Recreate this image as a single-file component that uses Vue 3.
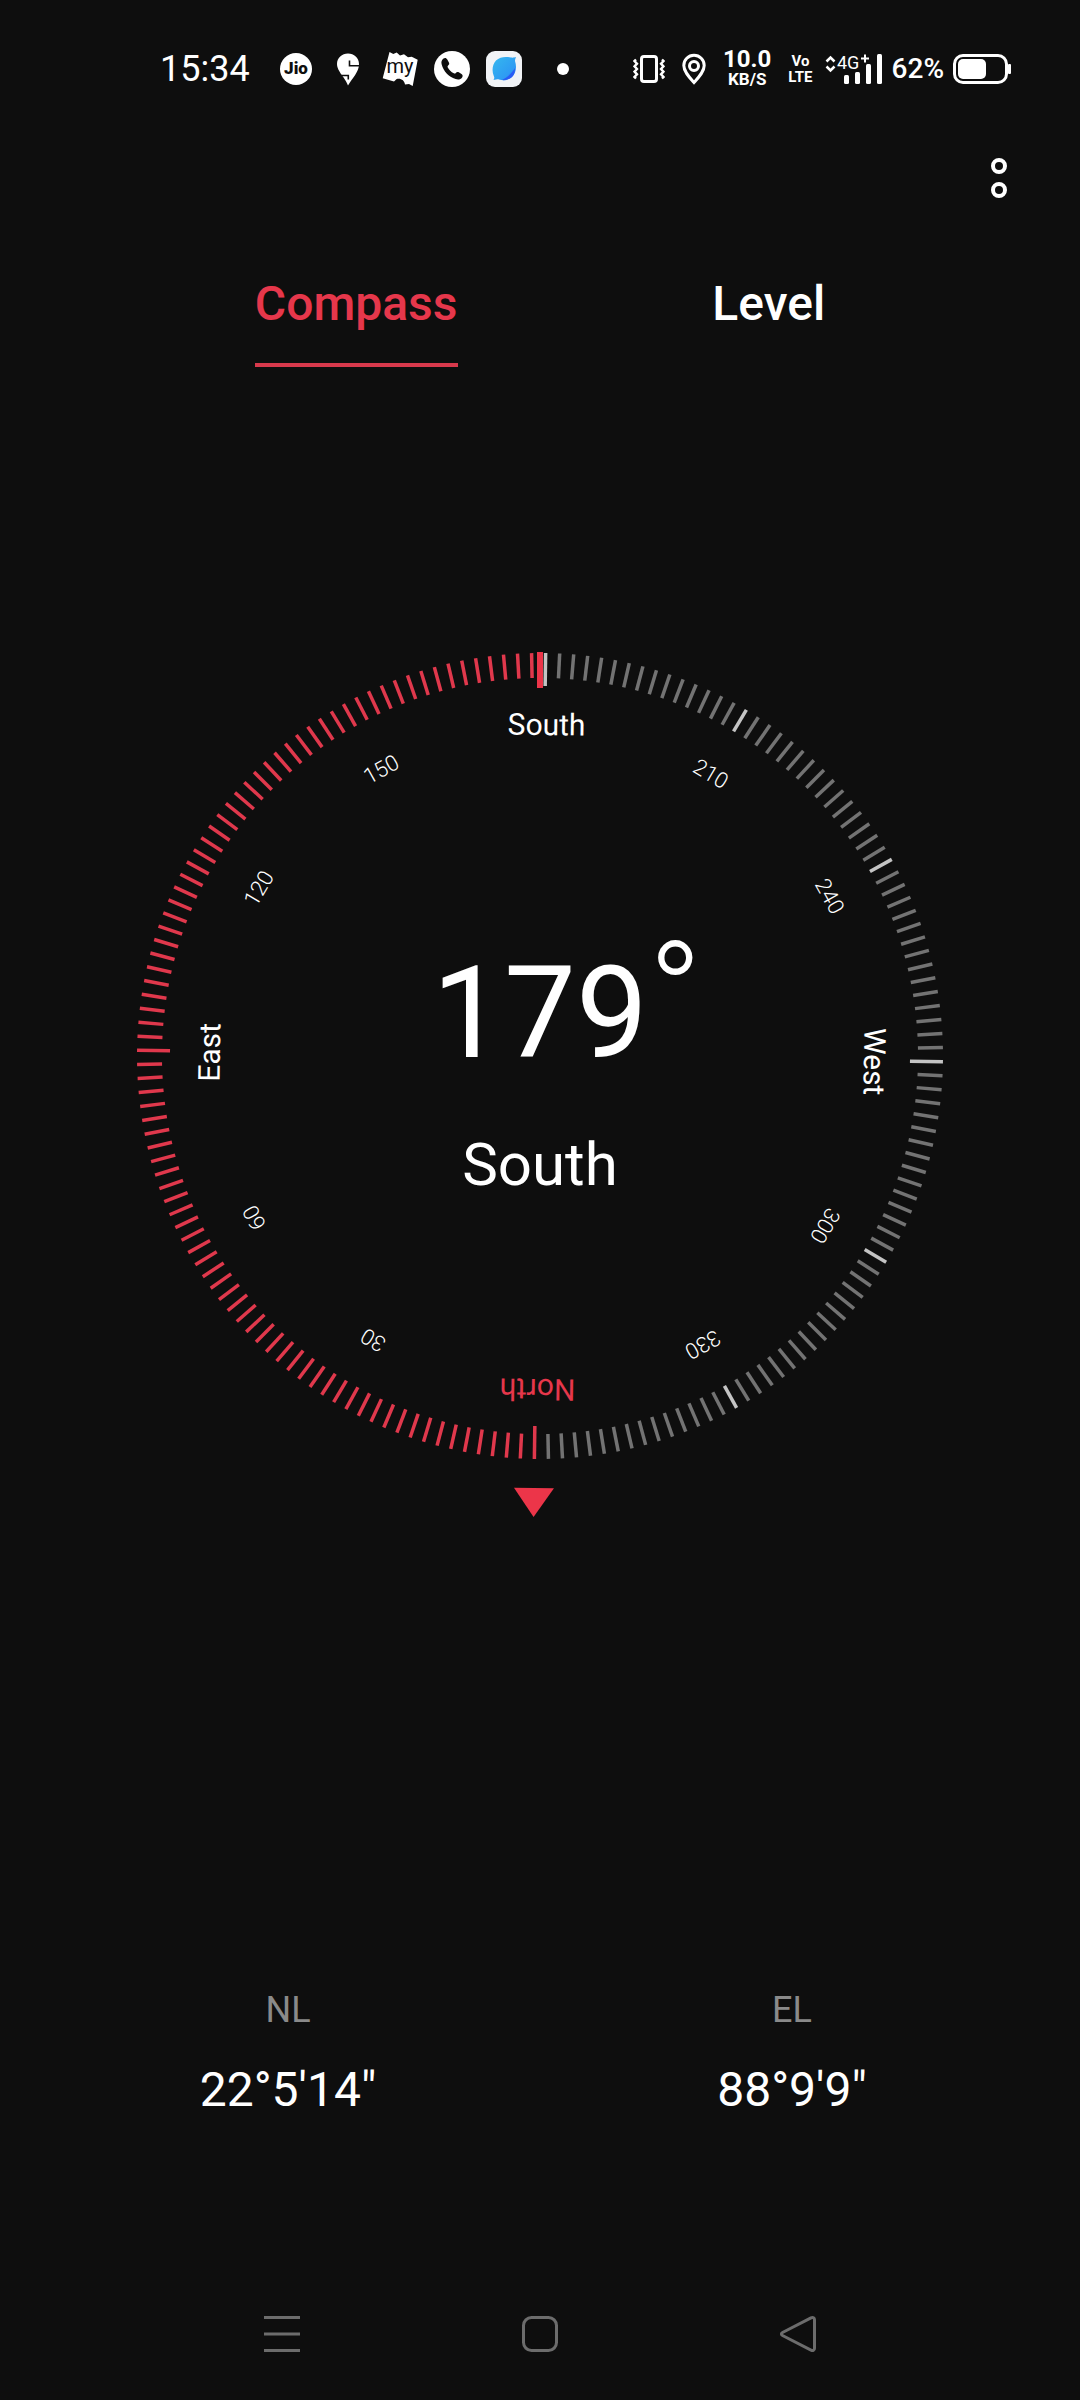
<script setup>
import { ref, computed } from 'vue'

// --- STATE ---
const tabs = ['Compass', 'Level']
const activeTab = ref('Compass')
const heading = ref(179.2)

const coords = [
  { label: 'NL', value: '22°5\'14"' },
  { label: 'EL', value: '88°9\'9"' }
]

const labels = [
  { deg: 0, text: 'North', type: 'north' },
  { deg: 30, text: '30', type: 'num' },
  { deg: 60, text: '60', type: 'num' },
  { deg: 90, text: 'East', type: 'word' },
  { deg: 120, text: '120', type: 'num' },
  { deg: 150, text: '150', type: 'num' },
  { deg: 180, text: 'South', type: 'word' },
  { deg: 210, text: '210', type: 'num' },
  { deg: 240, text: '240', type: 'num' },
  { deg: 270, text: 'West', type: 'word' },
  { deg: 300, text: '300', type: 'num' },
  { deg: 330, text: '330', type: 'num' }
]

// --- DIAL ---
const degrees = computed(() => Math.floor(heading.value))

const directionName = computed(() => {
  const names = ['North', 'East', 'South', 'West']
  return names[Math.round(heading.value / 90) % 4]
})

// One tick every 2 degrees, the swept part goes red
const ticks = computed(() => {
  const list = []
  for (let deg = 0; deg < 360; deg += 2) {
    let color = 'tick-gray'
    if (deg <= heading.value) color = 'tick-red'
    else if (deg % 30 === 0) color = 'tick-light'
    list.push({ deg, color, end: deg % 90 === 0 ? 62 : 54 })
  }
  return list
})

const turn = (deg) => `rotate(${deg - heading.value} 432 432)`
const turnLabel = (deg) => `rotate(${deg - heading.value} 434 433)`
</script>

<template>
  <div class="screen">
    <header class="status-bar">
      <div class="status-left">
        <span class="clock">15:34</span>
        <div class="app-icons">
          <svg width="36" height="36" viewBox="0 0 36 36">
            <circle cx="18" cy="18" r="16" fill="#fff" />
            <text x="18" y="23" class="jio" text-anchor="middle">Jio</text>
          </svg>
          <svg width="36" height="36" viewBox="0 0 36 36">
            <path d="M18 34.500C15.500 28 12 25 9.500 20.500 8 18 7 15.500 7 13 7 7 12 2.500 18 2.500S29 7 29 13c0 8-6.500 14-11 21.500z" fill="#fff" />
            <path d="M19.500 9.500v5.200H30M11 24.500h7.300v4" fill="none" stroke="#0e0e0e" stroke-width="1.600" />
          </svg>
          <svg width="36" height="36" viewBox="0 0 36 36">
            <path d="M7.500 1l3.800 2 3.400-1.500L18 4.500l4-1.200 4 3 3.700-.6 6 3L30.700 35 27 33l-4 .5c-.5-4-4-6.500-8.300-5.500L12 30.500.7 27.300z" fill="#fff" />
            <text x="18" y="22" class="my" text-anchor="middle">my</text>
          </svg>
          <svg width="36" height="36" viewBox="0 0 36 36">
            <circle cx="18" cy="18" r="18" fill="#fff" />
            <path d="M9.500 7.500c1.500-1 3-.5 3.800 1l1.600 3c.6 1.200.3 2.200-.8 3-.6.500-.7 1.200-.3 2 1.400 2.600 3.200 4.400 6 5.800.8.400 1.500.3 2-.4.800-1.100 1.900-1.300 3-.6l2.700 1.700c1.300.9 1.500 2.200.6 3.400-1.600 2.200-4 2.500-6.500 1.600C14.500 25.500 9.500 20.500 7.700 13.500 7 11 7.500 9 9.500 7.500z" fill="#0e0e0e" />
          </svg>
          <svg width="36" height="36" viewBox="0 0 36 36">
            <defs>
              <linearGradient id="leaf" x1="0" y1="0" x2="1" y2="1">
                <stop offset="0" stop-color="#35b8ee" />
                <stop offset="0.7" stop-color="#2e9bf3" />
                <stop offset="1" stop-color="#2b5cf0" />
              </linearGradient>
            </defs>
            <rect width="36" height="36" rx="9" fill="#f1f3f6" />
            <path d="M30 6c-.5 1.500-1 2.500-1 4 2 6 1 12-3 16-4 3.500-9 4-13 2.500-1.500-.5-3 .5-5.500.5 1-1.500 1-2.500.3-4C5.500 20 6.500 13 10 9.500 14 5.500 20 5.500 25 6.500c2 .4 3 0 5-.5z" fill="url(#leaf)" />
            <path d="M29 17c0 4-1 7-3 9-3 2.500-7 3.500-10 3 6-3 10-7 13-12z" fill="#2b5cf5" />
          </svg>
        </div>
        <span class="more-dot"></span>
      </div>

      <div class="status-right">
        <div class="signals">
          <svg width="32" height="30" viewBox="0 0 32 30" fill="none" stroke="#fff">
            <rect x="8.500" y="2.500" width="15" height="25" rx="2.500" stroke-width="3" />
            <path d="M3 5.500L1.500 7l2.500 2.700L1.500 12.300 4 15l-2.500 2.700L4 20.300 1.500 23 3 24.500M29 5.500L30.500 7 28 9.700l2.500 2.600L28 15l2.500 2.700-2.500 2.600 2.500 2.700-1.500 1.500" stroke-width="2.400" />
          </svg>
          <svg width="24" height="32" viewBox="0 0 24 32" fill="none" stroke="#fff" stroke-width="3">
            <path d="M12 29.500C7 24 1.800 18.500 1.800 12.500a10.200 10.200 0 0 1 20.400 0c0 6-5.200 11.500-10.200 17z" />
            <circle cx="12" cy="13" r="4.500" />
          </svg>
          <div class="net-speed">
            <span class="speed">10.0</span>
            <span class="unit">KB/S</span>
          </div>
          <div class="volte">
            <span>Vo</span>
            <span>LTE</span>
          </div>
        </div>
        <div class="power">
          <svg width="60" height="36" viewBox="0 0 60 36">
            <path d="M2.500 10.500l4-4 4 4M2.500 15.500l4 4 4-4" fill="none" stroke="#fff" stroke-width="2.500" />
            <text x="13" y="18" class="net-type">4G</text>
            <path d="M37 7.500h8M41 3.500v8" stroke="#fff" stroke-width="2" />
            <g fill="#fff">
              <rect x="20" y="24" width="5" height="9" rx="1.500" />
              <rect x="31" y="21" width="5" height="12" rx="1.500" />
              <rect x="42" y="13" width="5" height="20" rx="1.500" />
              <rect x="53" y="3" width="5" height="30" rx="1.500" />
            </g>
          </svg>
          <span class="percent">62%</span>
          <svg width="60" height="30" viewBox="0 0 60 30">
            <rect x="2.500" y="1.500" width="52" height="27" rx="8.500" fill="none" stroke="#fff" stroke-width="3" />
            <rect x="6" y="5" width="28" height="20" rx="5" fill="#fff" />
            <rect x="56" y="10" width="3" height="10" rx="1" fill="#fff" />
          </svg>
        </div>
      </div>
    </header>

    <div class="toolbar">
      <button class="btn-menu" aria-label="More options">
        <svg width="18" height="42" viewBox="0 0 18 42" fill="none" stroke="#fff" stroke-width="4">
          <circle cx="9" cy="9" r="6" />
          <circle cx="9" cy="33" r="6" />
        </svg>
      </button>
    </div>

    <nav class="tabs">
      <button
        v-for="t in tabs"
        :key="t"
        class="tab"
        :class="{ active: activeTab === t }"
        @click="activeTab = t"
      >{{ t }}</button>
    </nav>

    <main class="dial">
      <svg class="dial-face" viewBox="0 0 864 900">
        <line
          v-for="t in ticks"
          :key="t.deg"
          x1="432" y1="29" x2="432" :y2="t.end"
          class="tick" :class="t.color"
          :transform="turn(t.deg)"
        />
        <text
          v-for="l in labels"
          :key="l.deg"
          x="434" y="111"
          text-anchor="middle"
          :class="l.type"
          :transform="turnLabel(l.deg)"
        >{{ l.text }}</text>
        <path d="M412 0h40L432 -29z" class="marker" :transform="turn(0)" />
        <rect x="429" y="28" width="6" height="36" class="marker" />
      </svg>
      <div class="readout">
        <div class="degrees">{{ degrees }}<span class="degree-sign">°</span></div>
        <div class="direction">{{ directionName }}</div>
      </div>
    </main>

    <section class="coords">
      <div v-for="c in coords" :key="c.label" class="coord">
        <span class="coord-label">{{ c.label }}</span>
        <span class="coord-value">{{ c.value }}</span>
      </div>
    </section>

    <footer class="nav-bar">
      <button aria-label="Recent apps">
        <svg width="42" height="42" viewBox="0 0 42 42" fill="none" stroke="#6c6c6c" stroke-width="3">
          <path d="M3 4.500h36M3 21h36M3 37.500h36" />
        </svg>
      </button>
      <button aria-label="Home">
        <svg width="42" height="42" viewBox="0 0 42 42" fill="none" stroke="#6c6c6c" stroke-width="3">
          <rect x="4.500" y="4.500" width="33" height="33" rx="8" />
        </svg>
      </button>
      <button aria-label="Back">
        <svg width="42" height="42" viewBox="0 0 42 42" fill="none" stroke="#6c6c6c" stroke-width="3">
          <path d="M5.500 19.500L34 4.800c2-1 3.500 0 3.500 2v28.400c0 2-1.500 3-3.500 2L5.500 22.500c-1.500-.8-1.500-2.200 0-3z" />
        </svg>
      </button>
    </footer>
  </div>
</template>

<style>
body { background: #0e0e0e; }
</style>

<style scoped>
.screen { min-height: 100vh; display: flex; flex-direction: column; background: #0e0e0e; color: #fff; font-family: Roboto, 'Liberation Sans', sans-serif; }
button { background: none; border: 0; padding: 0; color: inherit; font-family: inherit; cursor: pointer; }
svg { display: block; }

.status-bar { display: flex; justify-content: space-between; align-items: center; height: 138px; padding: 0 68px 0 160px; }
.status-left { display: flex; align-items: center; }
.clock { font-size: 36px; line-height: 42px; margin-right: 28px; }
.app-icons { display: flex; gap: 16px; }
.jio { font-size: 17px; font-weight: 900; fill: #0e0e0e; }
.my { font-size: 20px; fill: #0e0e0e; }
.more-dot { width: 12px; height: 12px; border-radius: 50%; background: #fff; margin-left: 35px; }
.status-right { display: flex; align-items: center; gap: 11px; }
.signals { display: flex; align-items: center; gap: 17px; }
.net-speed { display: flex; flex-direction: column; align-items: center; }
.speed { font-size: 24px; line-height: 20px; font-weight: 700; }
.unit { font-size: 17px; line-height: 20px; font-weight: 700; }
.volte { display: flex; flex-direction: column; align-items: center; font-size: 15px; line-height: 16px; font-weight: 700; }
.power { display: flex; align-items: center; gap: 8px; }
.net-type { font-size: 18px; fill: #fff; }
.percent { font-size: 28px; line-height: 32px; font-weight: 500; }

.toolbar { display: flex; justify-content: flex-end; align-items: center; height: 80px; padding: 0 72px; }

.tabs { display: flex; justify-content: space-evenly; margin-top: 58px; }
.tab { font-size: 48px; line-height: 56px; font-weight: 500; padding-bottom: 31px; border-bottom: 4px solid transparent; }
.tab.active { color: #e6374b; border-color: #d8394c; }

.dial { display: grid; width: 80%; margin: 257px auto 0; }
.dial-face { grid-area: 1 / 1; width: 100%; overflow: visible; }
.tick { stroke-width: 3.5; }
.tick-red { stroke: #e0384c; }
.tick-gray { stroke: #737373; }
.tick-light { stroke: #c4c4c4; }
.marker { fill: #ec3549; }
.word, .north { font-size: 30px; fill: #fff; }
.north { fill: #e6374b; }
.num { font-size: 22px; font-weight: 300; fill: #fff; }

.readout { grid-area: 1 / 1; display: flex; flex-direction: column; align-items: center; gap: 42px; padding-top: 314px; }
.degrees { position: relative; font-size: 128px; line-height: 150px; }
.degree-sign { position: absolute; left: 100%; top: -18px; font-size: 144px; font-weight: 300; }
.direction { font-size: 60px; line-height: 70px; }

.coords { display: grid; grid-template-columns: 1fr 1fr; margin-top: auto; padding: 0 36px 150px; }
.coord { display: flex; flex-direction: column; align-items: center; gap: 31px; }
.coord-label { font-size: 36px; line-height: 42px; color: #8a8a8a; }
.coord-value { font-size: 48px; line-height: 56px; }

.nav-bar { display: grid; grid-template-columns: repeat(3, 1fr); justify-items: center; align-items: center; height: 132px; padding: 0 153px; }
</style>
